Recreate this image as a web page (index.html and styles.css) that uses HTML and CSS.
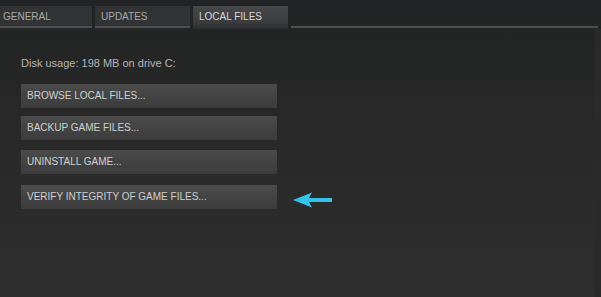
FILE: index.html
```html
<!DOCTYPE html>
<html>
<head>
<meta charset="utf-8">
<link rel="stylesheet" href="styles.css">
</head>
<body>
<div class="window">
  <div class="tabs">
    <div class="tab">GENERAL</div>
    <div class="tab">UPDATES</div>
    <div class="tab active">LOCAL FILES</div>
    <div class="tabfill"></div>
  </div>
  <div class="content">
    <div class="disk">Disk usage: 198 MB on drive C:</div>
    <div class="btn b1">BROWSE LOCAL FILES...</div>
    <div class="btn b2">BACKUP GAME FILES...</div>
    <div class="btn b3">UNINSTALL GAME...</div>
    <div class="row">
      <div class="btn">VERIFY INTEGRITY OF GAME FILES...</div>
      <svg class="arrow" width="42" height="18" viewBox="0 0 42 18">
        <path d="M1 9 L20 1.5 L17 7 L40 7 L40 11 L17 11 L20 16.5 Z" fill="#35c3ec"/>
      </svg>
    </div>
  </div>
  <div class="edge"></div>
</div>
</body>
</html>
```
FILE: styles.css
```css
html, body {
  margin: 0;
  padding: 0;
}
body {
  width: 601px;
  height: 297px;
  overflow: hidden;
  font-family: "Liberation Sans", Arial, sans-serif;
  background: #262626;
}
.window {
  position: relative;
  width: 601px;
  height: 297px;
  background: linear-gradient(#222324 0%, #282828 40%, #2e2e2e 100%);
}
.tabs {
  display: flex;
  height: 29px;
  padding-top: 6px;
  box-sizing: border-box;
  align-items: flex-start;
}
.tab {
  height: 22px;
  line-height: 21px;
  width: 92px;
  margin-right: 3px;
  padding-left: 3px;
  box-sizing: border-box;
  background: #323334;
  color: #a8aaac;
  font-size: 10px;
}
.tab:nth-child(2) {
  width: 95px;
  padding-left: 6px;
}
.tab.active {
  width: 95px;
  height: 23px;
  padding-left: 6px;
  background: linear-gradient(#474849, #3b3c3d 70%, #2c2d2e);
  color: #d8d9da;
}
.tab:not(.active) {
  border-bottom: 2px solid #4e4f50;
}
.tabfill {
  width: 307px;
  flex: none;
  height: 22px;
  border-bottom: 2px solid #4e4f50;
  box-sizing: border-box;
}
.content {
  padding: 27px 0 0 21px;
}
.disk {
  font-size: 11px;
  color: #b4b6b8;
  height: 14px;
  line-height: 14px;
  margin-bottom: 14px;
}
.btn {
  width: 256px;
  height: 24px;
  line-height: 24px;
  padding-left: 6px;
  box-sizing: border-box;
  font-size: 10px;
  color: #cfd0d1;
  background: linear-gradient(#4b4b4b, #3c3c3c);
}
.b1 { margin-bottom: 8px; }
.b2 { margin-bottom: 10px; }
.b3 { margin-bottom: 10px; }
.row {
  display: flex;
  align-items: center;
}
.arrow {
  margin-left: 15px;
  margin-top: 7px;
}
.edge {
  position: absolute;
  right: 0;
  top: 29px;
  width: 6px;
  bottom: 0;
  background: #2a2a2a;
}
```
